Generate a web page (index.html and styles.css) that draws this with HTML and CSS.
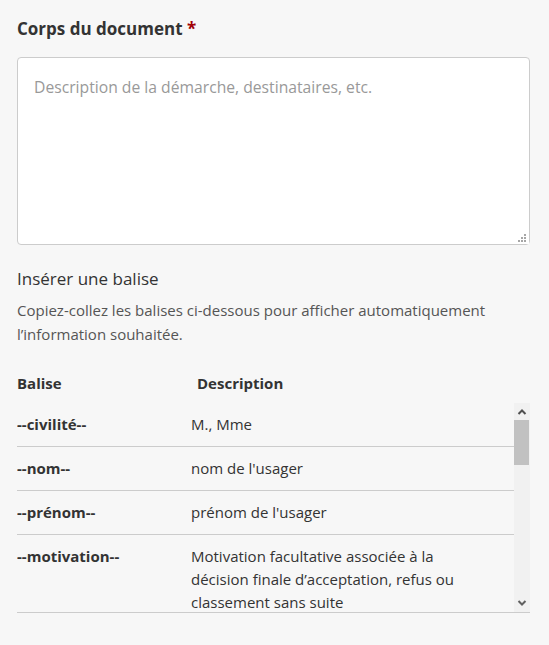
FILE: index.html
```html
<!DOCTYPE html>
<html lang="fr">
<head>
<meta charset="utf-8">
<title>Corps du document</title>
<link rel="stylesheet" href="styles.css">
</head>
<body>
<div class="form">
  <label class="label" for="body">Corps du document <span class="req">*</span></label>
  <textarea id="body" class="textarea" placeholder="Description de la démarche, destinataires, etc."></textarea>

  <h3 class="subtitle">Insérer une balise</h3>
  <p class="hint">Copiez-collez les balises ci-dessous pour afficher automatiquement l’information souhaitée.</p>

  <div class="thead">
    <div class="th th-tag">Balise</div>
    <div class="th">Description</div>
  </div>
  <div class="scrollwrap">
    <div class="viewport">
      <table class="tags">
        <tbody>
          <tr><td class="tag">--civilité--</td><td class="desc">M., Mme</td></tr>
          <tr><td class="tag">--nom--</td><td class="desc">nom de l'usager</td></tr>
          <tr><td class="tag">--prénom--</td><td class="desc">prénom de l'usager</td></tr>
          <tr><td class="tag">--motivation--</td><td class="desc">Motivation facultative associée à la décision finale d’acceptation, refus ou classement sans suite</td></tr>
          <tr><td class="tag">--date de dépôt--</td><td class="desc">Date du passage en construction du dossier par l’usager</td></tr>
          <tr><td class="tag">--date de passage en instruction--</td><td class="desc">Date du passage en instruction du dossier par l’instructeur</td></tr>
          <tr><td class="tag">--date de décision--</td><td class="desc">Date de la décision d’acceptation, refus, ou classement sans suite</td></tr>
          <tr><td class="tag">--libellé démarche--</td><td class="desc">Libellé de la démarche</td></tr>
        </tbody>
      </table>
    </div>
    <div class="scrollbar" aria-hidden="true">
      <div class="sb-btn">
        <svg width="16" height="17" viewBox="0 0 16 17"><path d="M4.5 11 L8 7.5 L11.5 11" fill="none" stroke="#505050" stroke-width="2"/></svg>
      </div>
      <div class="sb-track"><div class="sb-thumb"></div></div>
      <div class="sb-btn">
        <svg width="16" height="17" viewBox="0 0 16 17"><path d="M4.5 6 L8 9.5 L11.5 6" fill="none" stroke="#606060" stroke-width="2"/></svg>
      </div>
    </div>
  </div>
</div>
</body>
</html>
```

FILE: styles.css
```css
html, body {
  margin: 0;
  padding: 0;
  background: #f7f7f7;
}
body {
  font-family: "Open Sans", "Noto Sans", sans-serif;
  color: #333;
}
.form {
  padding: 17px 19px 17px 17px;
}
.label {
  display: block;
  font-size: 17px;
  line-height: 24px;
  font-weight: 700;
  color: #333;
  margin-bottom: 16px;
}
.req {
  color: #a10005;
}
.textarea {
  display: block;
  box-sizing: border-box;
  width: 100%;
  height: 188px;
  margin: 0;
  padding: 17px 16px;
  border: 1px solid #ccc;
  border-radius: 4px;
  background: #fff;
  font-family: inherit;
  font-size: 15.7px;
  line-height: 24px;
  color: #333;
}
.textarea::placeholder {
  color: #999;
}
.textarea::-webkit-resizer {
  background: #fff url("data:image/svg+xml,%3Csvg xmlns='http://www.w3.org/2000/svg' width='15' height='15'%3E%3Cg fill='%23a6a6a6'%3E%3Crect x='10' y='5' width='2' height='2'/%3E%3Crect x='7' y='8' width='2' height='2'/%3E%3Crect x='10' y='8' width='2' height='2'/%3E%3Crect x='4' y='11' width='2' height='2'/%3E%3Crect x='7' y='11' width='2' height='2'/%3E%3Crect x='10' y='11' width='2' height='2'/%3E%3C/g%3E%3C/svg%3E") no-repeat right bottom;
}
.subtitle {
  margin: 22px 0 0;
  font-size: 17px;
  line-height: 24px;
  font-weight: 400;
  color: #333;
}
.hint {
  margin: 7px 0 0;
  font-size: 15px;
  line-height: 24px;
  color: #555;
}
.thead {
  display: flex;
  margin-top: 25px;
  padding-bottom: 8px;
  font-size: 15px;
  line-height: 24px;
  font-weight: 700;
}
.th-tag {
  width: 180px;
}
.scrollwrap {
  display: flex;
  height: 209px;
  border-bottom: 1px solid #ccc;
}
.viewport {
  flex: 1;
  min-width: 0;
  overflow: hidden;
}
.scrollbar {
  width: 16px;
  flex: none;
  display: flex;
  flex-direction: column;
  background: #f1f1f1;
}
.sb-btn {
  height: 17px;
  flex: none;
}
.sb-btn svg {
  display: block;
}
.sb-track {
  flex: 1;
}
.sb-thumb {
  height: 45px;
  margin-right: 1px;
  background: #c1c1c1;
}
.tags {
  width: 100%;
  border-collapse: collapse;
  font-size: 15px;
  line-height: 23px;
}
.tags td {
  padding: 10px 0;
  vertical-align: top;
  border-bottom: 1px solid #ccc;
}
.tag {
  width: 174px;
  font-weight: 700;
}
.tags .desc {
  color: #333;
  padding-right: 40px;
}
```
